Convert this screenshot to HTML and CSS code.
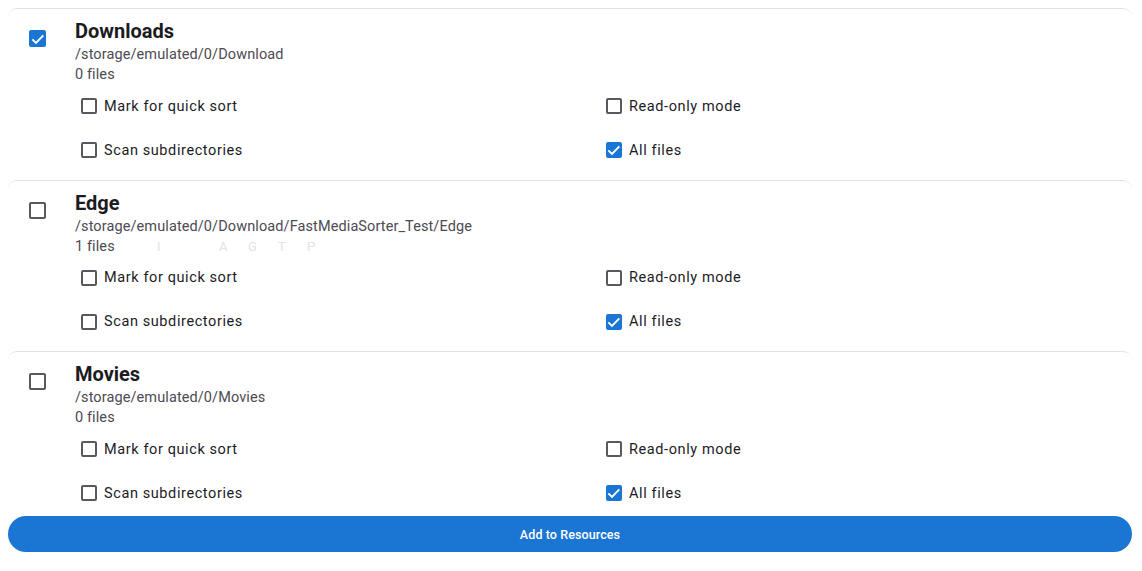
FILE: index.html
```html
<!DOCTYPE html>
<html>
<head>
<meta charset="utf-8">
<link rel="stylesheet" href="styles.css">
</head>
<body>
<div class="page">
  <div class="list">
    <div class="card">
      <div class="main-check"><span class="cb big checked"><svg viewBox="0 0 24 24"><path d="M3.5 12.5l5.5 5.5 11-11.5" /></svg></span></div>
      <div class="content">
        <div class="title">Downloads</div>
        <div class="path">/storage/emulated/0/Download</div>
        <div class="files">0 files</div>
        <div class="options">
          <div class="opt"><span class="cb"></span><span>Mark for quick sort</span></div>
          <div class="opt"><span class="cb"></span><span>Read-only mode</span></div>
          <div class="opt"><span class="cb"></span><span>Scan subdirectories</span></div>
          <div class="opt"><span class="cb checked"><svg viewBox="0 0 24 24"><path d="M3.5 12.5l5.5 5.5 11-11.5" /></svg></span><span>All files</span></div>
        </div>
      </div>
    </div>
    <div class="card">
      <div class="main-check"><span class="cb big"></span></div>
      <div class="content">
        <div class="title">Edge</div>
        <div class="path">/storage/emulated/0/Download/FastMediaSorter_Test/Edge</div>
        <div class="files"><span class="count">1 files</span><span class="ghost g1">I</span><span class="ghost g2">A</span><span class="ghost g3">G</span><span class="ghost g4">T</span><span class="ghost g5">P</span></div>
        <div class="options">
          <div class="opt"><span class="cb"></span><span>Mark for quick sort</span></div>
          <div class="opt"><span class="cb"></span><span>Read-only mode</span></div>
          <div class="opt"><span class="cb"></span><span>Scan subdirectories</span></div>
          <div class="opt"><span class="cb checked"><svg viewBox="0 0 24 24"><path d="M3.5 12.5l5.5 5.5 11-11.5" /></svg></span><span>All files</span></div>
        </div>
      </div>
    </div>
    <div class="card">
      <div class="main-check"><span class="cb big"></span></div>
      <div class="content">
        <div class="title">Movies</div>
        <div class="path">/storage/emulated/0/Movies</div>
        <div class="files">0 files</div>
        <div class="options">
          <div class="opt"><span class="cb"></span><span>Mark for quick sort</span></div>
          <div class="opt"><span class="cb"></span><span>Read-only mode</span></div>
          <div class="opt"><span class="cb"></span><span>Scan subdirectories</span></div>
          <div class="opt"><span class="cb checked"><svg viewBox="0 0 24 24"><path d="M3.5 12.5l5.5 5.5 11-11.5" /></svg></span><span>All files</span></div>
        </div>
      </div>
    </div>
  </div>
  <button class="add-btn">Add to Resources</button>
</div>
</body>
</html>
```
FILE: styles.css
```css
* { box-sizing: border-box; }
html, body { margin: 0; padding: 0; background: #ffffff; }
body {
  font-family: Roboto, "Liberation Sans", Arial, sans-serif;
  color: #1c1b1f;
  width: 1142px;
  height: 571px;
  overflow: hidden;
}
.page {
  padding: 8px 10px 0 8px;
  display: flex;
  flex-direction: column;
}
.list {
  height: 508px;
  overflow: hidden;
}
.card {
  height: 171.5px;
  border-top: 1px solid #e2e2e2;
  border-radius: 9px 9px 0 0;
  display: flex;
  background: #fff;
}
.main-check {
  width: 67px;
  flex: none;
  padding-left: 21px;
  padding-top: 21px;
}
.content {
  flex: 1;
  padding-top: 10px;
}
.title {
  font-size: 20px;
  line-height: 24px;
  font-weight: 700;
  color: #1c1b1f;
}
.path, .files {
  font-size: 14.5px;
  line-height: 20px;
  letter-spacing: 0.1px;
  color: #4d4a52;
}
.path { margin-top: 2px; }
.files { display: flex; }
.count { width: 82px; }
.ghost { color: #e4e4e4; font-size: 13px; }
.g1 { width: 62px; }
.g2 { width: 29px; }
.g3 { width: 30px; }
.g4 { width: 29px; }
.options {
  margin-left: 6px;
  margin-top: -1px;
  display: grid;
  grid-template-columns: 525px 1fr;
  grid-auto-rows: 44px;
}
.opt {
  display: flex;
  align-items: center;
  gap: 7px;
  font-size: 14.5px;
  letter-spacing: 0.6px;
  color: #1c1b1f;
}
.cb {
  width: 16px;
  height: 16px;
  border: 2px solid #5b5660;
  border-radius: 2px;
  display: inline-flex;
  align-items: center;
  justify-content: center;
  flex: none;
}
.cb.big {
  width: 17px;
  height: 17px;
}
.cb.checked {
  background: #1a76d2;
  border-color: #1a76d2;
}
.cb svg {
  width: 16px;
  height: 16px;
  flex: none;
  fill: none;
  stroke: #fff;
  stroke-width: 2.8;
}
.add-btn {
  margin-top: 0;
  height: 36px;
  width: 1124px;
  border: none;
  border-radius: 18px;
  background: #1a76d2;
  color: #fff;
  font-family: Roboto, "Liberation Sans", Arial, sans-serif;
  font-size: 12.5px;
  font-weight: 500;
  letter-spacing: 0.1px;
  padding: 0;
}
```
